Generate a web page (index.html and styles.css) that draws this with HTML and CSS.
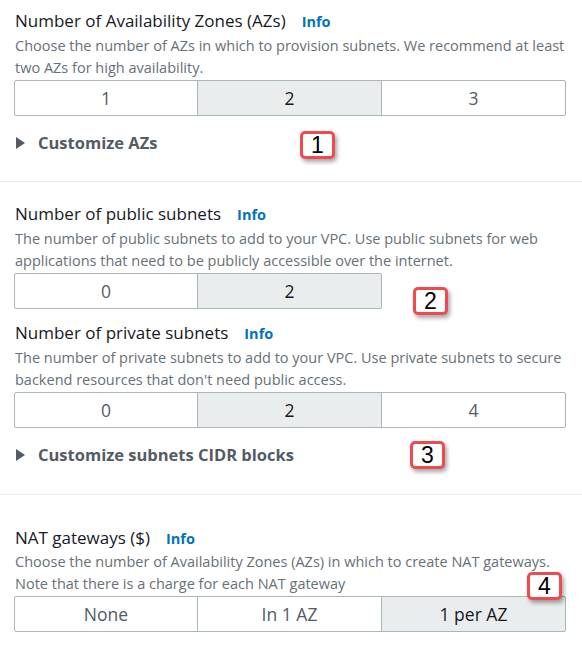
FILE: index.html
```html
<!DOCTYPE html>
<html>
<head>
<meta charset="utf-8">
<link rel="stylesheet" href="styles.css">
</head>
<body>
<div class="page">
  <section class="section first">
    <div class="label"><span>Number of Availability Zones (AZs)</span><a class="info">Info</a></div>
    <div class="desc">Choose the number of AZs in which to provision subnets. We recommend at least two AZs for high availability.</div>
    <div class="seg">
      <div class="opt">1</div>
      <div class="opt on">2</div>
      <div class="opt">3</div>
    </div>
    <div class="expander"><span class="caret"></span>Customize AZs</div>
  </section>
  <section class="section second">
    <div class="label"><span>Number of public subnets</span><a class="info">Info</a></div>
    <div class="desc">The number of public subnets to add to your VPC. Use public subnets for web applications that need to be publicly accessible over the internet.</div>
    <div class="seg">
      <div class="opt">0</div>
      <div class="opt on">2</div>
    </div>
    <div class="label sub"><span>Number of private subnets</span><a class="info">Info</a></div>
    <div class="desc">The number of private subnets to add to your VPC. Use private subnets to secure backend resources that don't need public access.</div>
    <div class="seg">
      <div class="opt">0</div>
      <div class="opt on">2</div>
      <div class="opt">4</div>
    </div>
    <div class="expander exp2"><span class="caret"></span>Customize subnets CIDR blocks</div>
  </section>
  <section class="section third">
    <div class="label"><span>NAT gateways ($)</span><a class="info">Info</a></div>
    <div class="desc tight">Choose the number of Availability Zones (AZs) in which to create NAT gateways. Note that there is a charge for each NAT gateway</div>
    <div class="seg tight">
      <div class="opt">None</div>
      <div class="opt">In 1 AZ</div>
      <div class="opt on">1 per AZ</div>
    </div>
  </section>
  <div class="badge b1">1</div>
  <div class="badge b2">2</div>
  <div class="badge b3">3</div>
  <div class="badge b4">4</div>
</div>
</body>
</html>
```
FILE: styles.css
```css
html, body {
  margin: 0;
  padding: 0;
  background: #ffffff;
}
.page {
  position: relative;
  width: 582px;
  height: 651px;
  overflow: hidden;
  font-family: "Open Sans", "Noto Sans", sans-serif;
  color: #16191f;
}
.section {
  padding: 0 14px 0 14px;
}
.section.first {
  padding-top: 9px;
  padding-bottom: 26px;
  border-bottom: 1px solid #eaeded;
}
.section.second {
  padding-top: 20px;
  padding-bottom: 27px;
  border-bottom: 1px solid #eaeded;
}
.section.third {
  padding-top: 31px;
}
.label {
  display: flex;
  align-items: baseline;
  gap: 16px;
  height: 24px;
  font-size: 17px;
  line-height: 24px;
  padding-left: 1px;
  color: #16191f;
}
.label.sub {
  margin-top: 12px;
}
.info {
  font-size: 14.5px;
  font-weight: 700;
  color: #0073bb;
}
.desc {
  font-size: 14.5px;
  line-height: 22px;
  padding-left: 1px;
  color: #687078;
  margin-top: 2px;
}
.desc.tight {
  margin-top: 1px;
}
.seg {
  display: grid;
  grid-template-columns: repeat(3, 184px);
  margin-top: 1px;
}
.opt {
  height: 34px;
  border: 1px solid #aab7b8;
  margin-left: -1px;
  display: flex;
  align-items: center;
  justify-content: center;
  font-size: 17.5px;
  color: #545b64;
  background: #ffffff;
}
.opt:first-child {
  margin-left: 0;
  border-radius: 2px 0 0 2px;
}
.opt:last-child {
  border-radius: 0 2px 2px 0;
}
.opt.on {
  background: #eaeded;
  color: #16191f;
}
.expander {
  margin-top: 15px;
  height: 24px;
  font-size: 16.5px;
  line-height: 24px;
  font-weight: 700;
  color: #545b64;
  display: flex;
  align-items: center;
  padding-left: 2px;
}
.expander.exp2 {
  margin-top: 15px;
}
.caret {
  width: 0;
  height: 0;
  border-top: 6px solid transparent;
  border-bottom: 6px solid transparent;
  border-left: 9px solid #545b64;
  margin-right: 13px;
}
.badge {
  position: absolute;
  box-sizing: border-box;
  width: 35px;
  height: 28px;
  padding-top: 1px;
  border: 3px solid #ef4b4f;
  border-radius: 5px;
  background: #ffffff;
  box-shadow: 2px 3px 4px rgba(0, 0, 0, 0.35);
  font-family: "Liberation Sans", Arial, sans-serif;
  font-size: 23px;
  line-height: 21px;
  text-align: center;
  color: #000000;
}
.b1 { left: 300px; top: 131px; }
.b2 { left: 413px; top: 287px; }
.b3 { left: 410px; top: 441px; }
.b4 { left: 527px; top: 572px; }
```
